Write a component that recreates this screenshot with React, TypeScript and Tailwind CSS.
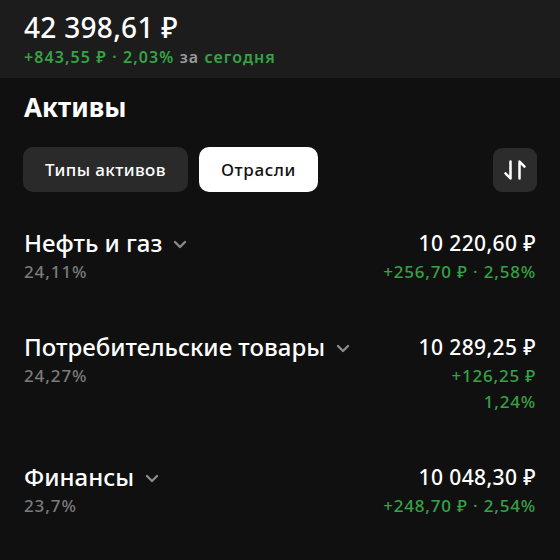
import React from "react";

const font = { fontFamily: '"Noto Sans", "Open Sans", sans-serif' };

function Chevron() {
  return (
    <svg width="14" height="9" viewBox="0 0 14 9" className="ml-[11px] mt-[2px] shrink-0">
      <path d="M2 2 L7 7 L12 2" fill="none" stroke="#8a8a8a" strokeWidth="2.4" strokeLinecap="round" strokeLinejoin="round" />
    </svg>
  );
}

function SortIcon() {
  return (
    <svg width="24" height="24" viewBox="0 0 24 24">
      <path d="M7.5 3.5 V20.5 L2.5 15.3" fill="none" stroke="#fff" strokeWidth="2.5" strokeLinecap="round" strokeLinejoin="round" />
      <path d="M16.5 20.5 V3.5 L21.5 8.7" fill="none" stroke="#fff" strokeWidth="2.5" strokeLinecap="round" strokeLinejoin="round" />
    </svg>
  );
}

type Row = { name: string; pct: string; value: string; lines: string[] };

const rows: Row[] = [
  { name: "Нефть и газ", pct: "24,11%", value: "10 220,60 ₽", lines: ["+256,70 ₽ · 2,58%"] },
  { name: "Потребительские товары", pct: "24,27%", value: "10 289,25 ₽", lines: ["+126,25 ₽", "1,24%"] },
  { name: "Финансы", pct: "23,7%", value: "10 048,30 ₽", lines: ["+248,70 ₽ · 2,54%"] },
];

export default function App() {
  return (
    <div className="w-[560px] h-[560px] bg-[#101010] overflow-hidden text-white" style={font}>
      <div className="bg-[#1c1c1c] h-[78px] px-6 pt-[8px]">
        <div className="text-[28px] leading-[38px] font-medium tracking-[0.3px]">42 398,61 ₽</div>
        <div className="text-[16px] leading-[20px] mt-[1px] font-semibold tracking-[1.1px] text-[#36a246]">
          +843,55 ₽ · 2,03% <span className="text-[#9a9a9a]">за</span> сегодня
        </div>
      </div>
      <div className="px-6">
        <div className="text-[26px] leading-[34px] font-bold pt-[12px]">Активы</div>
        <div className="flex items-center mt-[23px]">
          <div className="h-[45px] w-[165px] rounded-[10px] bg-[#2a2a2a] flex items-center justify-center text-[17px] tracking-[0.4px] font-medium -ml-[1px]">
            Типы активов
          </div>
          <div className="h-[45px] w-[119px] ml-[11px] rounded-[10px] bg-white text-[#111] flex items-center justify-center text-[17px] tracking-[0.6px] font-medium">
            Отрасли
          </div>
          <div className="ml-auto -mr-[1px] h-[44px] w-[44px] rounded-[9px] bg-[#2c2c2c] flex items-center justify-center">
            <SortIcon />
          </div>
        </div>
        <div className="mt-[35px] flex flex-col gap-[46px]">
          {rows.map((r) => (
            <div key={r.name} className="flex justify-between items-start">
              <div>
                <div className="flex items-center text-[24px] leading-[32px] font-medium">
                  {r.name}
                  <Chevron />
                </div>
                <div className="text-[17px] leading-[26px] tracking-[0.9px] font-medium text-[#7b7b7b]">{r.pct}</div>
              </div>
              <div className="text-right">
                <div className="text-[21px] leading-[32px] tracking-[0.4px] font-medium">{r.value}</div>
                {r.lines.map((l) => (
                  <div key={l} className="text-[17px] leading-[26px] tracking-[0.8px] font-medium text-[#36a246]">{l}</div>
                ))}
              </div>
            </div>
          ))}
        </div>
      </div>
    </div>
  );
}
